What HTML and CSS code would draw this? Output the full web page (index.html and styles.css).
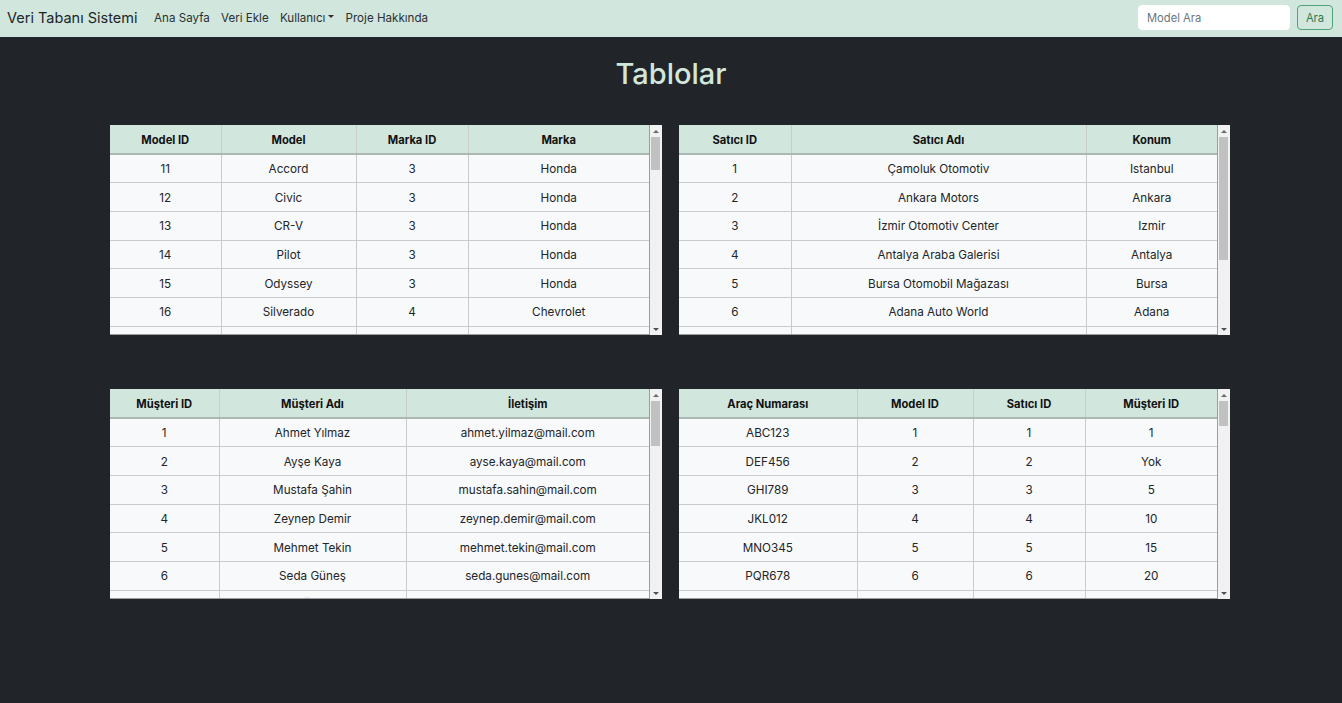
FILE: index.html
```html
<!DOCTYPE html>
<html lang="tr">
<head>
<meta charset="utf-8">
<title>Veri Tabanı Sistemi</title>
<link rel="stylesheet" href="styles.css">
</head>
<body>
<nav class="navbar">
  <a class="brand" href="#">Veri Tabanı Sistemi</a>
  <ul class="nav">
    <li><a href="#">Ana Sayfa</a></li>
    <li><a href="#">Veri Ekle</a></li>
    <li><a href="#" class="dropdown">Kullanıcı<span class="caret"></span></a></li>
    <li><a href="#">Proje Hakkında</a></li>
  </ul>
  <form class="search">
    <input type="text" placeholder="Model Ara">
    <button type="button">Ara</button>
  </form>
</nav>

<h1 class="title">Tablolar</h1>

<main class="grid">
  <div class="wrap">
    <div class="viewport">
    <table class="t-model">
      <thead><tr><th>Model ID</th><th>Model</th><th>Marka ID</th><th>Marka</th></tr></thead>
      <tbody>
        <tr><td>11</td><td>Accord</td><td>3</td><td>Honda</td></tr>
        <tr><td>12</td><td>Civic</td><td>3</td><td>Honda</td></tr>
        <tr><td>13</td><td>CR-V</td><td>3</td><td>Honda</td></tr>
        <tr><td>14</td><td>Pilot</td><td>3</td><td>Honda</td></tr>
        <tr><td>15</td><td>Odyssey</td><td>3</td><td>Honda</td></tr>
        <tr><td>16</td><td>Silverado</td><td>4</td><td>Chevrolet</td></tr>
        <tr><td>17</td><td>Malibu</td><td>4</td><td>Chevrolet</td></tr>
        <tr><td>18</td><td>Camaro</td><td>4</td><td>Chevrolet</td></tr>
        <tr><td>19</td><td>Equinox</td><td>4</td><td>Chevrolet</td></tr>
        <tr><td>20</td><td>Tahoe</td><td>4</td><td>Chevrolet</td></tr>
        <tr><td>21</td><td>Corolla</td><td>5</td><td>Toyota</td></tr>
        <tr><td>22</td><td>Camry</td><td>5</td><td>Toyota</td></tr>
        <tr><td>23</td><td>RAV4</td><td>5</td><td>Toyota</td></tr>
        <tr><td>24</td><td>Yaris</td><td>5</td><td>Toyota</td></tr>
        <tr><td>25</td><td>Hilux</td><td>5</td><td>Toyota</td></tr>
        <tr><td>26</td><td>Focus</td><td>6</td><td>Ford</td></tr>
        <tr><td>27</td><td>Fiesta</td><td>6</td><td>Ford</td></tr>
        <tr><td>28</td><td>Mustang</td><td>6</td><td>Ford</td></tr>
        <tr><td>29</td><td>Kuga</td><td>6</td><td>Ford</td></tr>
        <tr><td>30</td><td>Ranger</td><td>6</td><td>Ford</td></tr>
      </tbody>
    </table>
    </div>
    <div class="sbar">
      <span class="sb-btn"><i class="arrow-up"></i></span>
      <div class="sb-track"><div class="sb-thumb" style="height:33px"></div></div>
      <span class="sb-btn"><i class="arrow-down"></i></span>
    </div>
  </div>

  <div class="wrap">
    <div class="viewport">
    <table class="t-satici">
      <thead><tr><th>Satıcı ID</th><th>Satıcı Adı</th><th>Konum</th></tr></thead>
      <tbody>
        <tr><td>1</td><td>Çamoluk Otomotiv</td><td>Istanbul</td></tr>
        <tr><td>2</td><td>Ankara Motors</td><td>Ankara</td></tr>
        <tr><td>3</td><td>İzmir Otomotiv Center</td><td>Izmir</td></tr>
        <tr><td>4</td><td>Antalya Araba Galerisi</td><td>Antalya</td></tr>
        <tr><td>5</td><td>Bursa Otomobil Mağazası</td><td>Bursa</td></tr>
        <tr><td>6</td><td>Adana Auto World</td><td>Adana</td></tr>
        <tr><td>7</td><td>Konya Oto Market</td><td>Konya</td></tr>
        <tr><td>8</td><td>Trabzon Karadeniz Motors</td><td>Trabzon</td></tr>
        <tr><td>9</td><td>Eskişehir Oto Galeri</td><td>Eskişehir</td></tr>
        <tr><td>10</td><td>Gaziantep Auto Center</td><td>Gaziantep</td></tr>
      </tbody>
    </table>
    </div>
    <div class="sbar">
      <span class="sb-btn"><i class="arrow-up"></i></span>
      <div class="sb-track"><div class="sb-thumb" style="height:123px"></div></div>
      <span class="sb-btn"><i class="arrow-down"></i></span>
    </div>
  </div>

  <div class="wrap">
    <div class="viewport">
    <table class="t-musteri">
      <thead><tr><th>Müşteri ID</th><th>Müşteri Adı</th><th>İletişim</th></tr></thead>
      <tbody>
        <tr><td>1</td><td>Ahmet Yılmaz</td><td>ahmet.yilmaz@mail.com</td></tr>
        <tr><td>2</td><td>Ayşe Kaya</td><td>ayse.kaya@mail.com</td></tr>
        <tr><td>3</td><td>Mustafa Şahin</td><td>mustafa.sahin@mail.com</td></tr>
        <tr><td>4</td><td>Zeynep Demir</td><td>zeynep.demir@mail.com</td></tr>
        <tr><td>5</td><td>Mehmet Tekin</td><td>mehmet.tekin@mail.com</td></tr>
        <tr><td>6</td><td>Seda Güneş</td><td>seda.gunes@mail.com</td></tr>
        <tr><td>7</td><td>Ali Öztürk</td><td>ali.ozturk@mail.com</td></tr>
        <tr><td>8</td><td>Elif Aydın</td><td>elif.aydin@mail.com</td></tr>
        <tr><td>9</td><td>Burak Çelik</td><td>burak.celik@mail.com</td></tr>
        <tr><td>10</td><td>Fatma Arslan</td><td>fatma.arslan@mail.com</td></tr>
      </tbody>
    </table>
    </div>
    <div class="sbar">
      <span class="sb-btn"><i class="arrow-up"></i></span>
      <div class="sb-track"><div class="sb-thumb" style="height:45px"></div></div>
      <span class="sb-btn"><i class="arrow-down"></i></span>
    </div>
  </div>

  <div class="wrap">
    <div class="viewport">
    <table class="t-arac">
      <thead><tr><th>Araç Numarası</th><th>Model ID</th><th>Satıcı ID</th><th>Müşteri ID</th></tr></thead>
      <tbody>
        <tr><td>ABC123</td><td>1</td><td>1</td><td>1</td></tr>
        <tr><td>DEF456</td><td>2</td><td>2</td><td>Yok</td></tr>
        <tr><td>GHI789</td><td>3</td><td>3</td><td>5</td></tr>
        <tr><td>JKL012</td><td>4</td><td>4</td><td>10</td></tr>
        <tr><td>MNO345</td><td>5</td><td>5</td><td>15</td></tr>
        <tr><td>PQR678</td><td>6</td><td>6</td><td>20</td></tr>
        <tr><td>STU901</td><td>7</td><td>7</td><td>25</td></tr>
        <tr><td>VWX234</td><td>8</td><td>8</td><td>Yok</td></tr>
        <tr><td>YZA567</td><td>9</td><td>9</td><td>2</td></tr>
        <tr><td>BCD890</td><td>10</td><td>10</td><td>7</td></tr>
      </tbody>
    </table>
    </div>
    <div class="sbar">
      <span class="sb-btn"><i class="arrow-up"></i></span>
      <div class="sb-track"><div class="sb-thumb" style="height:25px"></div></div>
      <span class="sb-btn"><i class="arrow-down"></i></span>
    </div>
  </div>
</main>
</body>
</html>
```

FILE: styles.css
```css
* { box-sizing: border-box; }

html, body {
  margin: 0;
  padding: 0;
  height: 100%;
}

body {
  background: #212529;
  font-family: "Inter", "Noto Sans", "Liberation Sans", sans-serif;
  color: #212529;
  overflow: hidden;
}

/* ---------- navbar ---------- */
.navbar {
  height: 37px;
  background: #d1e7dd;
  display: flex;
  align-items: center;
  padding: 0 9px 0 7px;
}

.brand {
  font-size: 14.5px;
  color: #212529;
  text-decoration: none;
  margin-right: 11px;
  white-space: nowrap;
  transform: translateY(-1px);
}

.nav {
  list-style: none;
  margin: 0;
  padding: 0;
  display: flex;
  flex: 1;
  transform: translateY(-1px);
}

.nav a {
  display: flex;
  align-items: center;
  padding: 0 5.6px;
  font-size: 11.6px;
  color: #2b2f33;
  text-decoration: none;
  white-space: nowrap;
}

.caret {
  display: inline-block;
  margin-left: 3px;
  width: 0;
  height: 0;
  border-left: 3px solid transparent;
  border-right: 3px solid transparent;
  border-top: 3px solid #2b2f33;
  transform: translateY(-1px);
}

.search {
  display: flex;
  gap: 7px;
  margin: 0;
  transform: translateY(-1px);
}

.search input {
  width: 152px;
  height: 25px;
  border: 1px solid #ffffff;
  border-radius: 4px;
  background: #fff;
  padding: 0 8px;
  font-family: inherit;
  font-size: 11.2px;
  color: #212529;
  outline: none;
}

.search input::placeholder {
  color: #6c757d;
}

.search button {
  width: 36px;
  height: 25px;
  border: 1px solid #4fa376;
  border-radius: 4px;
  background: transparent;
  color: #2f7a52;
  font-family: inherit;
  font-size: 11.2px;
  padding: 0;
  cursor: pointer;
}

/* ---------- title ---------- */
.title {
  margin: 20px 0 0;
  text-align: center;
  font-size: 29px;
  line-height: 34px;
  font-weight: 500;
  color: #d1e7dd;
}

/* ---------- tables ---------- */
.grid {
  width: 1120px;
  margin: 34px auto 0;
  display: grid;
  grid-template-columns: 552px 551px;
  column-gap: 17px;
  row-gap: 54px;
  transform: translateX(-1px);
}

.wrap {
  height: 210px;
  display: flex;
  background: #f8f9fa;
}

.viewport {
  flex: 1;
  min-width: 0;
  overflow: hidden;
  border-right: 1px solid #9a9c9e;
  border-bottom: 1px solid #9a9c9e;
}

/* fake scrollbar */
.sbar {
  width: 12px;
  flex: none;
  display: flex;
  flex-direction: column;
  background: #f1f1f1;
}

.sb-btn {
  height: 12px;
  flex: none;
  display: flex;
  align-items: center;
  justify-content: center;
}

.arrow-up,
.arrow-down {
  display: block;
  width: 0;
  height: 0;
  border-left: 3px solid transparent;
  border-right: 3px solid transparent;
}

.arrow-up { border-bottom: 3px solid #6a6a6a; }
.arrow-down { border-top: 3px solid #505050; }

.sb-track {
  flex: 1;
}

.sb-thumb {
  margin: 0 2px 0 1px;
  background: #c1c1c1;
}

table {
  width: 100%;
  border-collapse: collapse;
  table-layout: fixed;
  line-height: 16.8px;
}

th, td {
  text-align: center;
  border: 1px solid #c9cbcd;
  white-space: nowrap;
  overflow: hidden;
}

tr > :first-child { border-left: none; }
tr > :last-child { border-right: none; }
thead tr th { border-top: none; }

th {
  background: #d1e7dd;
  color: #111;
  font-size: 11.2px;
  font-weight: 700;
  border-bottom: 2px solid #aeb8b3;
  height: 28px;
  padding: 7px 6px 4px;
}

td {
  background: #f8f9fa;
  color: #212529;
  font-size: 11.7px;
  font-weight: 400;
  padding: 6.2px 6px 4.7px;
}

/* column widths */
.t-model th:nth-child(1) { width: 111px; }
.t-model th:nth-child(2) { width: 135px; }
.t-model th:nth-child(3) { width: 112px; }

.t-satici th:nth-child(1) { width: 112px; }
.t-satici th:nth-child(3) { width: 131px; }

.t-musteri th:nth-child(1) { width: 109px; }
.t-musteri th:nth-child(2) { width: 187px; }

.t-arac th:nth-child(1) { width: 178px; }
.t-arac th:nth-child(2) { width: 116px; }
.t-arac th:nth-child(3) { width: 112px; }
```
